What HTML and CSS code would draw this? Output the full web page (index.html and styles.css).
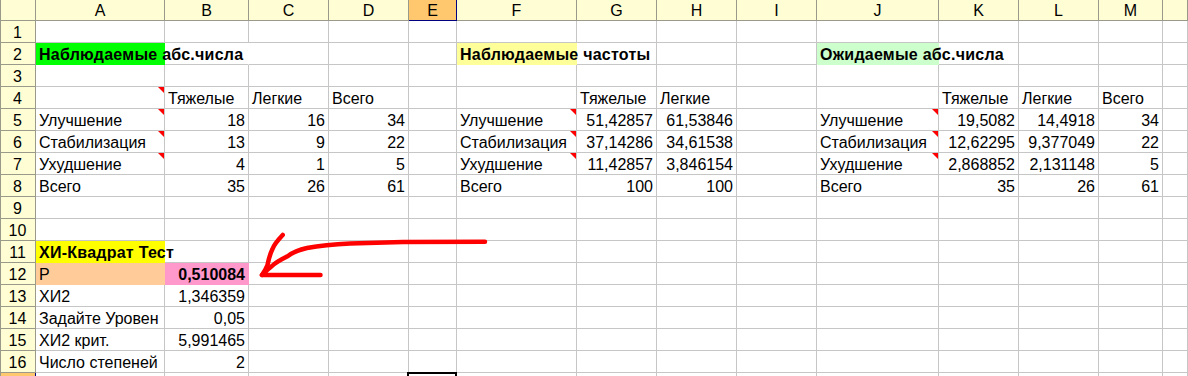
FILE: index.html
```html
<!DOCTYPE html>
<html lang="ru">
<head>
<meta charset="utf-8">
<title>Хи-квадрат</title>
<link rel="stylesheet" href="styles.css">
</head>
<body>
<div class="sheet">
  <div class="h corner"></div><div class="h">A</div><div class="h">B</div><div class="h">C</div><div class="h">D</div><div class="h hs">E</div><div class="h">F</div><div class="h">G</div><div class="h">H</div><div class="h">I</div><div class="h">J</div><div class="h">K</div><div class="h">L</div><div class="h">M</div><div class="h"></div>

  <div class="rh">1</div><div class="c"></div><div class="c"></div><div class="c"></div><div class="c"></div><div class="c"></div><div class="c"></div><div class="c"></div><div class="c"></div><div class="c"></div><div class="c"></div><div class="c"></div><div class="c"></div><div class="c"></div><div class="c"></div>

  <div class="rh">2</div><div class="c b lbl ov fill green">Наблюдаемые абс.числа</div><div class="c nb"></div><div class="c"></div><div class="c"></div><div class="c"></div><div class="c b lbl ov fill lyellow">Наблюдаемые частоты</div><div class="c"></div><div class="c"></div><div class="c"></div><div class="c b lbl ov fill lgreen">Ожидаемые абс.числа</div><div class="c"></div><div class="c"></div><div class="c"></div><div class="c"></div>

  <div class="rh">3</div><div class="c"></div><div class="c"></div><div class="c"></div><div class="c"></div><div class="c"></div><div class="c"></div><div class="c"></div><div class="c"></div><div class="c"></div><div class="c"></div><div class="c"></div><div class="c"></div><div class="c"></div><div class="c"></div>

  <div class="rh">4</div><div class="c cm"></div><div class="c">Тяжелые</div><div class="c">Легкие</div><div class="c">Всего</div><div class="c"></div><div class="c"></div><div class="c">Тяжелые</div><div class="c">Легкие</div><div class="c"></div><div class="c"></div><div class="c">Тяжелые</div><div class="c">Легкие</div><div class="c">Всего</div><div class="c"></div>

  <div class="rh">5</div><div class="c cm">Улучшение</div><div class="c r">18</div><div class="c r">16</div><div class="c r">34</div><div class="c"></div><div class="c cm">Улучшение</div><div class="c r">51,42857</div><div class="c r">61,53846</div><div class="c"></div><div class="c cm">Улучшение</div><div class="c r">19,5082</div><div class="c r">14,4918</div><div class="c r">34</div><div class="c"></div>

  <div class="rh">6</div><div class="c cm">Стабилизация</div><div class="c r">13</div><div class="c r">9</div><div class="c r">22</div><div class="c"></div><div class="c cm">Стабилизация</div><div class="c r">37,14286</div><div class="c r">34,61538</div><div class="c"></div><div class="c cm">Стабилизация</div><div class="c r">12,62295</div><div class="c r">9,377049</div><div class="c r">22</div><div class="c"></div>

  <div class="rh">7</div><div class="c cm">Ухудшение</div><div class="c r">4</div><div class="c r">1</div><div class="c r">5</div><div class="c"></div><div class="c cm">Ухудшение</div><div class="c r">11,42857</div><div class="c r">3,846154</div><div class="c"></div><div class="c cm">Ухудшение</div><div class="c r">2,868852</div><div class="c r">2,131148</div><div class="c r">5</div><div class="c"></div>

  <div class="rh">8</div><div class="c">Всего</div><div class="c r">35</div><div class="c r">26</div><div class="c r">61</div><div class="c"></div><div class="c">Всего</div><div class="c r">100</div><div class="c r">100</div><div class="c"></div><div class="c">Всего</div><div class="c r">35</div><div class="c r">26</div><div class="c r">61</div><div class="c"></div>

  <div class="rh">9</div><div class="c"></div><div class="c"></div><div class="c"></div><div class="c"></div><div class="c"></div><div class="c"></div><div class="c"></div><div class="c"></div><div class="c"></div><div class="c"></div><div class="c"></div><div class="c"></div><div class="c"></div><div class="c"></div>

  <div class="rh">10</div><div class="c"></div><div class="c"></div><div class="c"></div><div class="c"></div><div class="c"></div><div class="c"></div><div class="c"></div><div class="c"></div><div class="c"></div><div class="c"></div><div class="c"></div><div class="c"></div><div class="c"></div><div class="c"></div>

  <div class="rh">11</div><div class="c b lbl ov fill yellow">ХИ-Квадрат Тест</div><div class="c"></div><div class="c"></div><div class="c"></div><div class="c"></div><div class="c"></div><div class="c"></div><div class="c"></div><div class="c"></div><div class="c"></div><div class="c"></div><div class="c"></div><div class="c"></div><div class="c"></div>

  <div class="rh">12</div><div class="c fill peach">P</div><div class="c r b fill pink">0,510084</div><div class="c"></div><div class="c"></div><div class="c"></div><div class="c"></div><div class="c"></div><div class="c"></div><div class="c"></div><div class="c"></div><div class="c"></div><div class="c"></div><div class="c"></div><div class="c"></div>

  <div class="rh">13</div><div class="c">ХИ2</div><div class="c r">1,346359</div><div class="c"></div><div class="c"></div><div class="c"></div><div class="c"></div><div class="c"></div><div class="c"></div><div class="c"></div><div class="c"></div><div class="c"></div><div class="c"></div><div class="c"></div><div class="c"></div>

  <div class="rh">14</div><div class="c">Задайте Уровен</div><div class="c r">0,05</div><div class="c"></div><div class="c"></div><div class="c"></div><div class="c"></div><div class="c"></div><div class="c"></div><div class="c"></div><div class="c"></div><div class="c"></div><div class="c"></div><div class="c"></div><div class="c"></div>

  <div class="rh">15</div><div class="c">ХИ2 крит.</div><div class="c r">5,991465</div><div class="c"></div><div class="c"></div><div class="c"></div><div class="c"></div><div class="c"></div><div class="c"></div><div class="c"></div><div class="c"></div><div class="c"></div><div class="c"></div><div class="c"></div><div class="c"></div>

  <div class="rh">16</div><div class="c">Число степеней</div><div class="c r">2</div><div class="c"></div><div class="c"></div><div class="c"></div><div class="c"></div><div class="c"></div><div class="c"></div><div class="c"></div><div class="c"></div><div class="c"></div><div class="c"></div><div class="c"></div><div class="c"></div>

  <div class="rh rhs"></div><div class="c"></div><div class="c"></div><div class="c"></div><div class="c"></div><div class="c sel"></div><div class="c"></div><div class="c"></div><div class="c"></div><div class="c"></div><div class="c"></div><div class="c"></div><div class="c"></div><div class="c"></div><div class="c"></div>
</div>

<svg class="arrow" width="1188" height="376" viewBox="0 0 1188 376" aria-hidden="true">
  <path d="M485 241.7 L403 242 L350 243.5 C330 244.5 318 246 307 248 C298 250 292 253 288 256 C282 259 276 262 272 266 C268 269 265 272 262 275 L320.5 275" />
  <path d="M282.7 235 C277 241 274 245 272.5 249 C270 254 268.5 260 267.5 265 C266 269 264 272 262 275" />
</svg>
</body>
</html>
```

FILE: styles.css
```css
html, body {
  margin: 0;
  padding: 0;
  background: #ffffff;
}

body {
  width: 1188px;
  height: 376px;
  overflow: hidden;
  position: relative;
  font-family: "Liberation Sans", Arial, sans-serif;
  font-size: 16px;
  color: #000000;
}

.sheet {
  display: grid;
  grid-template-columns: 36px 129px 84px 80px 80px 48px 120px 80px 80px 80px 122px 80px 80px 64px 25px;
  grid-template-rows: 21px;
  grid-auto-rows: 22px;
  height: 376px;
  overflow: hidden;
}

/* column and row headers */
.h,
.rh {
  box-sizing: border-box;
  background: #fffdd3;
  border-right: 1px solid #9a9a8a;
  border-bottom: 1px solid #9a9a8a;
  text-align: center;
  white-space: nowrap;
  overflow: hidden;
}

.h {
  padding-top: 1px;
  line-height: 19px;
}

.rh {
  padding-top: 2px;
  line-height: 19px;
  box-shadow: inset 1px 0 0 #9a9a8a;
}

.corner {
  box-shadow: inset 1px 0 0 #9a9a8a;
}

.hs {
  background: #ffc86e;
  border-right-color: #000080;
  border-bottom-color: #000080;
}

.rhs {
  background: #ffc86e;
  border-right-color: #000080;
}

/* cells */
.c {
  box-sizing: border-box;
  border-right: 1px solid #c6c6c6;
  border-bottom: 1px solid #c6c6c6;
  padding: 2px 3px 0 3px;
  line-height: 19px;
  white-space: nowrap;
  overflow: hidden;
  position: relative;
}

.r {
  text-align: right;
}

.b {
  font-weight: bold;
}

.lbl {
  letter-spacing: 0.25px;
}

.ov {
  overflow: visible;
  border-right-color: transparent;
}

.nb {
  border-right-color: transparent;
}

.fill {
  border-right-color: transparent;
  border-bottom-color: transparent;
}

.green { background: #00ff00; }
.lyellow { background: #ffff99; }
.lgreen { background: #ccffcc; }
.yellow { background: #ffff00; }
.peach { background: #ffcc99; }
.pink { background: #ff99cc; }

/* comment indicator */
.cm::after {
  content: "";
  position: absolute;
  top: 0;
  right: 0;
  width: 0;
  height: 0;
  border-left: 6px solid transparent;
  border-top: 6px solid #ff0000;
}

/* active cell */
.sel {
  overflow: visible;
}

.sel::after {
  content: "";
  position: absolute;
  top: -1px;
  left: -2px;
  right: -1px;
  bottom: -1px;
  border: 2px solid #000000;
}

/* hand-drawn arrow */
.arrow {
  position: absolute;
  top: 0;
  left: 0;
  pointer-events: none;
}

.arrow path {
  fill: none;
  stroke: #ff0000;
  stroke-width: 4.5;
  stroke-linecap: round;
  stroke-linejoin: round;
}
```
